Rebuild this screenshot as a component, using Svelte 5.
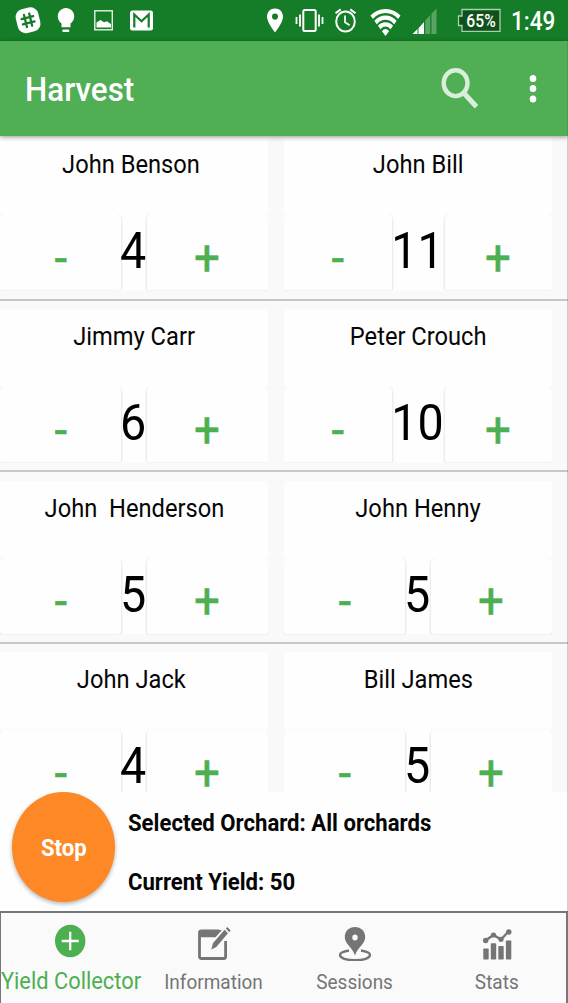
<script>
  const rows = [
    [{ name: 'John Benson ', count: 4 }, { name: 'John Bill', count: 11 }],
    [{ name: 'Jimmy Carr', count: 6 }, { name: 'Peter Crouch', count: 10 }],
    [{ name: 'John  Henderson', count: 5 }, { name: 'John Henny', count: 5 }],
    [{ name: 'John Jack ', count: 4 }, { name: 'Bill James', count: 5 }]
  ];
</script>

<div class="screen">
  <div class="status">
    <svg width="568" height="41" viewBox="0 0 568 41">
      <rect x="16.500" y="8" width="23" height="24.500" rx="8" fill="#fff" transform="rotate(-14 28 20)" />
      <g transform="rotate(-14 28 20)" stroke="#157d28" stroke-width="2.300" stroke-linecap="round">
        <path d="M25.300 14v12.500M30.700 14v12.500M22 17.500h12M22 23h12" />
      </g>
      <path d="M66 8c-4.600 0-8.200 3.700-8.200 8.400 0 3.200 1.600 5.400 3.700 7.200v3.600h9v-3.600c2.100-1.800 3.700-4 3.700-7.200C74.200 11.700 70.600 8 66 8z" fill="#fff" />
      <rect x="62.300" y="29.500" width="7" height="2.500" rx="1" fill="#fff" />
      <rect x="94.800" y="10.800" width="17.500" height="19" fill="none" stroke="#e6f2e7" stroke-width="1.400" />
      <path d="M96.500 27.500v-5l4-2.500 3.500 2.300 3-1 4 3v3.200z" fill="#fff" />
      <rect x="130" y="10.500" width="23" height="20" rx="2.500" fill="#fff" />
      <path d="M134.300 27.500V14.500l7.200 6.800 7.200-6.800v13" fill="none" stroke="#157d28" stroke-width="2.200" />
      <path fill-rule="evenodd" d="M275 8.500c-4.600 0-8 3.500-8 8.200 0 5.800 8 15.600 8 15.600s8-9.800 8-15.600c0-4.700-3.400-8.200-8-8.200zm0 5a3 3.100 0 1 1 0 6.200 3 3.100 0 0 1 0-6.200z" fill="#fff" />
      <g fill="none" stroke="#fff" stroke-width="2">
        <rect x="303.300" y="10" width="12.400" height="21" rx="1.500" />
        <path d="M300 14.500v12M296.500 17v7M319 14.500v12M322.500 17v7" stroke-width="1.800" />
        <ellipse cx="345.500" cy="21.500" rx="9.300" ry="10" />
        <path d="M345 15.500v6.700l4.600 3" stroke-width="1.700" />
        <path d="M335.500 13.200l5.200-3.800M355.500 13.200l-5.200-3.800" />
      </g>
      <clipPath id="fan"><path d="M385.500 36L369.300 14Q385.500 2 401.700 14z M369 14L370 8H401L402 14z" /></clipPath>
      <g clip-path="url(#fan)">
        <ellipse cx="385.500" cy="34.500" rx="4.600" ry="5.400" fill="#fff" />
        <g fill="none" stroke="#fff" stroke-width="4.200">
          <ellipse cx="385.500" cy="34.500" rx="8.700" ry="10.200" />
          <ellipse cx="385.500" cy="34.500" rx="14" ry="16.800" />
          <ellipse cx="385.500" cy="34.500" rx="20.500" ry="23.500" />
        </g>
      </g>
      <path d="M412.500 34l5-5V34zM418.500 28.200L424 22v12h-5.500z" fill="#fff" />
      <path d="M425.200 20.500l5-5.500v19h-5zM431.500 13.600l5-5.200V34h-5z" fill="#5aa463" />
      <path d="M462 9.500h38v21.800h-38v-5.800h-3.500v-9.500h3.500z" fill="#105119" stroke="#a9cfae" stroke-width="1.300" />
    </svg>
    <span class="battery t">65%</span>
    <span class="clock t">1:49</span>
  </div>

  <header>
    <h1 class="t">Harvest</h1>
    <svg class="search" width="40" height="42" viewBox="0 0 40 42" fill="none" stroke="#daefdb">
      <ellipse cx="14.600" cy="15.200" rx="11.900" ry="12.900" stroke-width="4.400" />
      <path d="M23.700 26L35.500 38.700" stroke-width="5" />
    </svg>
    <svg class="more" width="10" height="30" viewBox="0 0 10 30" fill="#fff">
      <ellipse cx="5" cy="4.500" rx="3.300" ry="3.500" />
      <ellipse cx="5" cy="14.600" rx="3.300" ry="3.500" />
      <ellipse cx="5" cy="24.900" rx="3.300" ry="3.500" />
    </svg>
  </header>

  <main>
    {#each rows as row}
      <div class="row">
        {#each row as person}
          <section class="card">
            <div class="name"><span class="t">{person.name}</span></div>
            <div class="counter">
              <button class="minus"><span class="t">-</span></button>
              <div class="count" class:wide={person.count > 9}><span class="t">{person.count}</span></div>
              <button class="plus"><span class="t">+</span></button>
            </div>
          </section>
        {/each}
      </div>
    {/each}
  </main>

  <div class="summary">
    <button class="stop"><span class="t">Stop</span></button>
    <div class="info">
      <p class="t">Selected Orchard: All orchards</p>
      <p class="t">Current Yield: 50</p>
    </div>
  </div>

  <nav>
    <a class="active">
      <svg width="36" height="40" viewBox="0 0 36 40">
        <ellipse cx="17.200" cy="20" rx="15.200" ry="16.200" fill="#4caf50" />
        <path d="M8.700 20h17M17.200 10.800v18.400" stroke="#fff" stroke-width="2.300" />
      </svg>
      <span class="t">Yield Collector</span>
    </a>
    <a>
      <svg width="36" height="40" viewBox="0 0 36 40">
        <path d="M24 9.800H6.200a1.700 1.700 0 0 0-1.700 1.700v24.300a1.700 1.700 0 0 0 1.700 1.700h22.700a1.700 1.700 0 0 0 1.700-1.700V20" fill="none" stroke="#757575" stroke-width="2.800" />
        <path d="M4 9h23l-6.500 7.300H4z" fill="#757575" />
        <path d="M16.300 28.400l1.600-6.200L29.500 8.700l3.500 3.500-11.700 13.700zM30.800 7.600l1.500-1.500 3.400 3.400-1.500 1.700z" fill="#757575" />
      </svg>
      <span class="t">Information</span>
    </a>
    <a>
      <svg width="36" height="40" viewBox="0 0 36 40">
        <path d="M12 29.500c-5.500.8-9 2.500-9 4.600 0 3 6.500 5.200 15 5.200s15-2.200 15-5.200c0-2.100-3.500-3.800-9-4.600" fill="none" stroke="#757575" stroke-width="2.400" />
        <path fill-rule="evenodd" d="M18 6C12 6 7.800 10.300 7.800 16c0 7.500 7.500 9.700 10.200 18.500C20.700 25.700 28.200 23.500 28.200 16 28.200 10.300 24 6 18 6zm0 7.500a2.700 3 0 1 1 0 6 2.700 3 0 0 1 0-6z" fill="#757575" />
      </svg>
      <span class="t">Sessions</span>
    </a>
    <a>
      <svg width="36" height="40" viewBox="0 0 36 40" fill="#757575">
        <rect x="4.300" y="27.500" width="5.400" height="11" rx=".8" />
        <rect x="11.800" y="22.200" width="5.400" height="16.300" rx=".8" />
        <rect x="19.300" y="25" width="5.400" height="13.500" rx=".8" />
        <rect x="26.900" y="19.500" width="5.400" height="19" rx=".8" />
        <path d="M6.500 19.500l8-5.500 7.500 4.500 7.500-8" fill="none" stroke="#757575" stroke-width="2.400" />
        <circle cx="6.700" cy="19.500" r="2.700" /><circle cx="14.500" cy="14" r="2.600" /><circle cx="22" cy="18.300" r="2.600" /><circle cx="29.800" cy="11" r="2.700" />
      </svg>
      <span class="t">Stats</span>
    </a>
  </nav>
</div>

<style>
  :global(body) { margin: 0; }
  .screen {
    position: relative;
    width: 568px;
    height: 1003px;
    overflow: hidden;
    display: flex;
    flex-direction: column;
    background: #fdfdfd;
    color: #060606;
    font-family: Roboto, sans-serif;
  }
  .screen::after {
    content: '';
    position: absolute;
    z-index: 2;
    top: 0;
    right: 0;
    width: 1px;
    height: 912px;
    background: rgba(70, 80, 70, 0.25);
  }
  .t { display: inline-block; white-space: pre; transform: scaleX(0.922); }
  button { box-sizing: border-box; padding: 0; border: 0; font-family: inherit; }
  .status { position: relative; flex: none; height: 41px; background: #157d28; color: #fff; }
  .status svg { display: block; }
  .battery {
    position: absolute;
    left: 461px;
    top: 9px;
    width: 40px;
    text-align: center;
    font-size: 18px;
    font-weight: 500;
    line-height: 23px;
    transform: scaleX(0.87);
  }
  .clock { position: absolute; left: 511px; top: 6px; font-size: 25px; font-weight: 500; line-height: 32px; transform-origin: left; transform: scaleX(0.9); }
  header {
    position: relative;
    z-index: 1;
    flex: none;
    display: flex;
    align-items: center;
    box-sizing: border-box;
    height: 95px;
    padding-left: 25px;
    background: #50ae55;
    box-shadow: 0 1px 5px rgba(0, 0, 0, 0.4);
    color: #fff;
  }
  h1 { flex: 1; margin: 1px 0 0; font-size: 34px; font-weight: 500; line-height: 40px; transform-origin: left; transform: scaleX(0.933); }
  .search { margin-right: 47px; }
  .more { margin-right: 30px; }
  main { flex: none; height: 656px; overflow: hidden; background: #f9f9f9; }
  .row {
    display: flex;
    gap: 16px;
    box-sizing: border-box;
    height: 171.700px;
    padding-top: 8.500px;
    border-bottom: 2px solid #c6c6c6;
  }
  .row:first-child { height: 164.500px; padding-top: 1px; }
  .card { width: 268px; height: 153.500px; border-radius: 4px; background: #fefefe; }
  .name { height: 77px; font-size: 25.700px; line-height: 54px; text-align: center; }
  .counter { display: flex; height: 76.500px; }
  .counter button {
    flex: 1 1 0;
    height: 76.500px;
    padding-top: 10.500px;
    border-radius: 5px 5px 2px 2px;
    background: #fefefe;
    box-shadow: 0 1px 3px rgba(0, 0, 0, 0.2);
    color: #4caf50;
    font-size: 49.500px;
    line-height: 66px;
    -webkit-text-stroke: 0.500px #4caf50;
  }
  .minus { clip-path: inset(0 -3px 0 0); }
  .plus { clip-path: inset(0 0 0 -3px); }
  .count { display: flex; justify-content: center; width: 26px; font-size: 50.600px; line-height: 74px; color: #000; }
  .count .t { position: relative; left: -0.500px; }
  .count.wide { width: 53px; }
  .summary { flex: none; display: flex; height: 119px; background: #fefefe; }
  .stop {
    width: 103px;
    height: 110px;
    margin-left: 12px;
    border-radius: 50%;
    background: #fd8825;
    box-shadow: 0 2px 4px rgba(0, 0, 0, 0.3);
    color: #fff;
    font-size: 24px;
    font-weight: 700;
    padding-top: 2px;
  }
  .info { padding: 14px 0 0 12.500px; font-size: 24px; font-weight: 700; }
  .info p { display: block; margin: 0 0 25px; line-height: 34px; transform-origin: left; }
  nav {
    flex: 1;
    display: flex;
    box-sizing: border-box;
    padding: 2px 0 0 0;
    box-shadow: inset 1px 2px #777, inset -2px 0 #777;
    background: #fafafa;
    color: #757575;
  }
  nav a { flex: 1 1 0; width: 0; display: flex; flex-direction: column; align-items: center; padding-top: 8px; font-size: 20.600px; line-height: 30px; }
  nav a svg { flex: none; }
  nav a span { margin-top: 5.500px; }
  .active { color: #4caf50; font-size: 23.700px; }
  .active span { margin-top: 5px; }
</style>
